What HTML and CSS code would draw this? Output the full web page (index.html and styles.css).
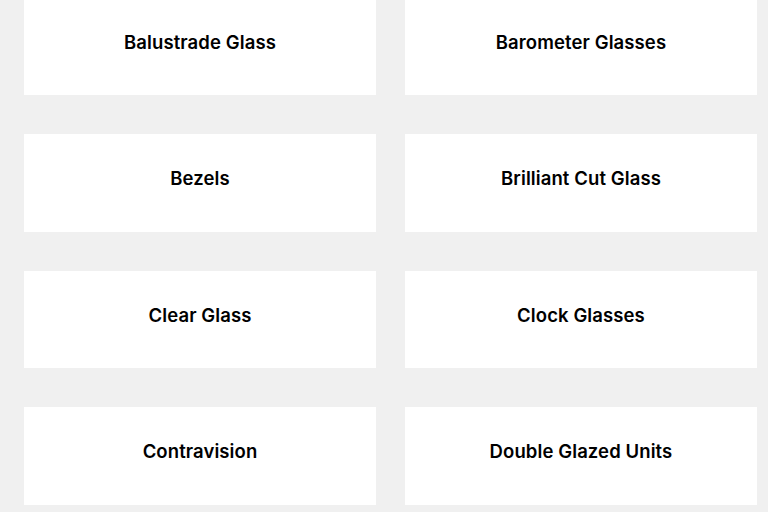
FILE: index.html
```html
<!DOCTYPE html>
<html lang="en">
<head>
    <meta charset="UTF-8">
    <meta name="viewport" content="width=device-width, initial-scale=1.0">
    <title>Glass Products</title>
    <link rel="stylesheet" href="styles.css">
</head>
<body>
    <!-- Product categories -->
    <div class="products">
        <div class="card"><h3>Balustrade Glass</h3></div>
        <div class="card"><h3>Barometer Glasses</h3></div>
        <div class="card"><h3>Bezels</h3></div>
        <div class="card"><h3>Brilliant Cut Glass</h3></div>
        <div class="card"><h3>Clear Glass</h3></div>
        <div class="card"><h3>Clock Glasses</h3></div>
        <div class="card"><h3>Contravision</h3></div>
        <div class="card"><h3>Double Glazed Units</h3></div>
    </div>
</body>
</html>
```

FILE: styles.css
```css
body {
    font-family: 'Inter', 'Open Sans', sans-serif;
    margin: 0;
    padding: 0;
    background-color: #f0f0f0;
}

.products {
    display: grid;
    grid-template-columns: 352px 352px;
    column-gap: 29px;
    row-gap: 39px;
    padding: 0 11px 0 24px;
    margin-top: -2.5px;
}

.card {
    background-color: #fff;
    height: 97.5px;
    display: flex;
    align-items: center;
    justify-content: center;
    padding-bottom: 9px;
    box-sizing: border-box;
}

.card h3 {
    margin: 0;
    font-size: 18.5px;
    font-weight: 600;
    letter-spacing: 0.1px;
    color: #000;
}
```
